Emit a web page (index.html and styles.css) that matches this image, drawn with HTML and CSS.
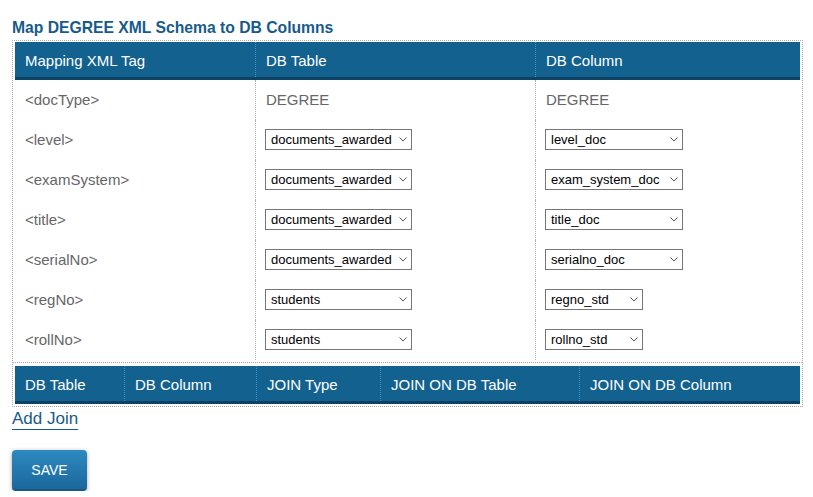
FILE: index.html
```html
<!DOCTYPE html>
<html>
<head>
<meta charset="utf-8">
<link rel="stylesheet" href="styles.css">
</head>
<body>
<div class="page">
  <h2 class="title">Map DEGREE XML Schema to DB Columns</h2>
  <div class="frame">
    <div class="map-section">
      <div class="grid map-grid head">
        <div class="hcell">Mapping XML Tag</div>
        <div class="hcell sep">DB Table</div>
        <div class="hcell sep">DB Column</div>
      </div>
      <div class="grid map-grid row">
        <div class="cell">&lt;docType&gt;</div>
        <div class="cell sep">DEGREE</div>
        <div class="cell sep">DEGREE</div>
      </div>
      <div class="grid map-grid row">
        <div class="cell">&lt;level&gt;</div>
        <div class="cell sep"><span class="sel w147"><select><option>documents_awarded</option></select><svg class="chev" viewBox="0 0 8 5" width="8" height="5"><path d="M0.5 0.5 L4 4 L7.5 0.5" fill="none" stroke="#555" stroke-width="1"/></svg></span></div>
        <div class="cell sep"><span class="sel w137"><select><option>level_doc</option></select><svg class="chev" viewBox="0 0 8 5" width="8" height="5"><path d="M0.5 0.5 L4 4 L7.5 0.5" fill="none" stroke="#555" stroke-width="1"/></svg></span></div>
      </div>
      <div class="grid map-grid row">
        <div class="cell">&lt;examSystem&gt;</div>
        <div class="cell sep"><span class="sel w147"><select><option>documents_awarded</option></select><svg class="chev" viewBox="0 0 8 5" width="8" height="5"><path d="M0.5 0.5 L4 4 L7.5 0.5" fill="none" stroke="#555" stroke-width="1"/></svg></span></div>
        <div class="cell sep"><span class="sel w137"><select><option>exam_system_doc</option></select><svg class="chev" viewBox="0 0 8 5" width="8" height="5"><path d="M0.5 0.5 L4 4 L7.5 0.5" fill="none" stroke="#555" stroke-width="1"/></svg></span></div>
      </div>
      <div class="grid map-grid row">
        <div class="cell">&lt;title&gt;</div>
        <div class="cell sep"><span class="sel w147"><select><option>documents_awarded</option></select><svg class="chev" viewBox="0 0 8 5" width="8" height="5"><path d="M0.5 0.5 L4 4 L7.5 0.5" fill="none" stroke="#555" stroke-width="1"/></svg></span></div>
        <div class="cell sep"><span class="sel w137"><select><option>title_doc</option></select><svg class="chev" viewBox="0 0 8 5" width="8" height="5"><path d="M0.5 0.5 L4 4 L7.5 0.5" fill="none" stroke="#555" stroke-width="1"/></svg></span></div>
      </div>
      <div class="grid map-grid row">
        <div class="cell">&lt;serialNo&gt;</div>
        <div class="cell sep"><span class="sel w147"><select><option>documents_awarded</option></select><svg class="chev" viewBox="0 0 8 5" width="8" height="5"><path d="M0.5 0.5 L4 4 L7.5 0.5" fill="none" stroke="#555" stroke-width="1"/></svg></span></div>
        <div class="cell sep"><span class="sel w137"><select><option>serialno_doc</option></select><svg class="chev" viewBox="0 0 8 5" width="8" height="5"><path d="M0.5 0.5 L4 4 L7.5 0.5" fill="none" stroke="#555" stroke-width="1"/></svg></span></div>
      </div>
      <div class="grid map-grid row">
        <div class="cell">&lt;regNo&gt;</div>
        <div class="cell sep"><span class="sel w147"><select><option>students</option></select><svg class="chev" viewBox="0 0 8 5" width="8" height="5"><path d="M0.5 0.5 L4 4 L7.5 0.5" fill="none" stroke="#555" stroke-width="1"/></svg></span></div>
        <div class="cell sep"><span class="sel w98"><select><option>regno_std</option></select><svg class="chev" viewBox="0 0 8 5" width="8" height="5"><path d="M0.5 0.5 L4 4 L7.5 0.5" fill="none" stroke="#555" stroke-width="1"/></svg></span></div>
      </div>
      <div class="grid map-grid row">
        <div class="cell">&lt;rollNo&gt;</div>
        <div class="cell sep"><span class="sel w147"><select><option>students</option></select><svg class="chev" viewBox="0 0 8 5" width="8" height="5"><path d="M0.5 0.5 L4 4 L7.5 0.5" fill="none" stroke="#555" stroke-width="1"/></svg></span></div>
        <div class="cell sep"><span class="sel w98"><select><option>rollno_std</option></select><svg class="chev" viewBox="0 0 8 5" width="8" height="5"><path d="M0.5 0.5 L4 4 L7.5 0.5" fill="none" stroke="#555" stroke-width="1"/></svg></span></div>
      </div>
    </div>
    <div class="join-section">
      <div class="grid join-grid head">
        <div class="hcell">DB Table</div>
        <div class="hcell sep">DB Column</div>
        <div class="hcell sep">JOIN Type</div>
        <div class="hcell sep">JOIN ON DB Table</div>
        <div class="hcell sep">JOIN ON DB Column</div>
      </div>
    </div>
  </div>
  <a class="add-join" href="#">Add Join</a>
  <button class="save" type="button">SAVE</button>
</div>
</body>
</html>
```

FILE: styles.css
```css
html, body {
  margin: 0;
  padding: 0;
  background: #fff;
  font-family: "Liberation Sans", Arial, sans-serif;
}

.page {
  padding: 19px 0 0 12px;
}

.title {
  margin: 0 0 3px 0;
  font-size: 15.7px;
  line-height: 18px;
  font-weight: bold;
  color: #175b8b;
}

.frame {
  width: 785px;
  padding: 1px 2px 0 2px;
  border: 1px dotted #a8a8a8;
}

.map-section {
  padding-bottom: 2px;
}

.join-section {
  margin: 0 -2px;
  padding: 3px 2px 2px 2px;
  border-top: 1px dotted #a8a8a8;
}

.grid {
  display: grid;
}

.map-grid {
  grid-template-columns: 240px 280px 265px;
}

.join-grid {
  grid-template-columns: 109px 132px 124px 199px 221px;
}

.head {
  background: #12618f;
  border-bottom: 3px solid #0c4263;
  color: #fff;
  font-size: 15px;
}

.hcell {
  height: 35px;
  display: flex;
  align-items: center;
  padding-left: 10px;
  padding-top: 1px;
  box-sizing: border-box;
}

.hcell.sep {
  border-left: 1px dotted #3e90cc;
}

.row {
  height: 40px;
  color: #666;
  font-size: 15px;
}

.cell {
  display: flex;
  align-items: center;
  padding-left: 10px;
  padding-bottom: 2px;
}

.cell.sep {
  border-left: 1px dotted #b0b0b0;
}

.sel {
  position: relative;
  display: inline-block;
  height: 21px;
  margin-left: -1px;
}

.sel select {
  appearance: none;
  -webkit-appearance: none;
  box-sizing: border-box;
  width: 100%;
  height: 21px;
  margin: 0;
  padding: 0 0 0 5px;
  border: 1px solid #767676;
  border-radius: 0;
  background: #fff;
  color: #000;
  font-family: "Liberation Sans", Arial, sans-serif;
  font-size: 13px;
}

.sel .chev {
  position: absolute;
  right: 5px;
  top: 8px;
  pointer-events: none;
}

.w147 { width: 147px; }
.w137 { width: 138px; }
.w98 { width: 98px; }

.add-join {
  display: inline-block;
  margin-top: 2px;
  font-size: 17px;
  line-height: 20px;
  color: #175b8b;
  text-decoration: underline;
  text-underline-offset: 5px;
  text-decoration-thickness: 1px;
}

.save {
  display: block;
  margin-top: 21px;
  width: 75px;
  height: 41px;
  border: none;
  border-radius: 4px;
  background: linear-gradient(#2c8ac0, #1b679c);
  border-bottom: 2px solid #165783;
  box-shadow: 0 1px 4px rgba(0, 0, 0, 0.35);
  color: #fff;
  font-family: "Liberation Sans", Arial, sans-serif;
  font-size: 14px;
  padding: 0;
}
```
